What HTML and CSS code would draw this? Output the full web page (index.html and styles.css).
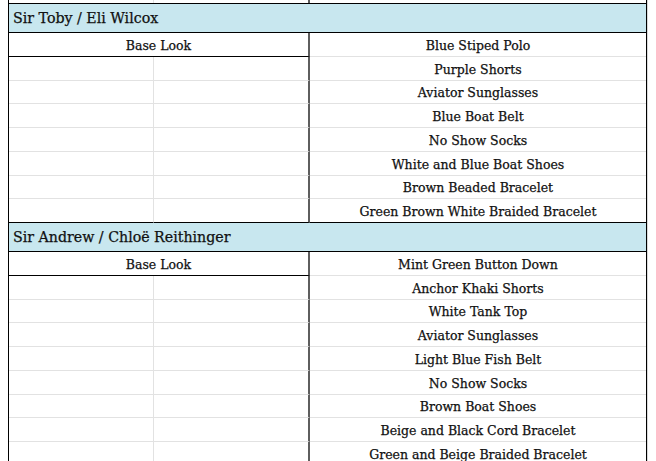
FILE: index.html
```html
<!DOCTYPE html>
<html>
<head>
<meta charset="utf-8">
<link rel="stylesheet" href="styles.css">
</head>
<body>
<div class="sheet">
  <div class="stub"><div class="c a"></div><div class="c b"></div><div class="c r"></div></div>

  <section class="block">
    <div class="hdr">Sir Toby / Eli Wilcox</div>
    <div class="row first"><div class="c ab">Base Look</div><div class="c r">Blue Stiped Polo</div></div>
    <div class="row"><div class="c a"></div><div class="c b"></div><div class="c r">Purple Shorts</div></div>
    <div class="row"><div class="c a"></div><div class="c b"></div><div class="c r">Aviator Sunglasses</div></div>
    <div class="row"><div class="c a"></div><div class="c b"></div><div class="c r">Blue Boat Belt</div></div>
    <div class="row"><div class="c a"></div><div class="c b"></div><div class="c r">No Show Socks</div></div>
    <div class="row"><div class="c a"></div><div class="c b"></div><div class="c r">White and Blue Boat Shoes</div></div>
    <div class="row"><div class="c a"></div><div class="c b"></div><div class="c r">Brown Beaded Bracelet</div></div>
    <div class="row last"><div class="c a"></div><div class="c b"></div><div class="c r">Green Brown White Braided Bracelet</div></div>
  </section>

  <section class="block">
    <div class="hdr">Sir Andrew / Chloë Reithinger</div>
    <div class="row first"><div class="c ab">Base Look</div><div class="c r">Mint Green Button Down</div></div>
    <div class="row"><div class="c a"></div><div class="c b"></div><div class="c r">Anchor Khaki Shorts</div></div>
    <div class="row"><div class="c a"></div><div class="c b"></div><div class="c r">White Tank Top</div></div>
    <div class="row"><div class="c a"></div><div class="c b"></div><div class="c r">Aviator Sunglasses</div></div>
    <div class="row"><div class="c a"></div><div class="c b"></div><div class="c r">Light Blue Fish Belt</div></div>
    <div class="row"><div class="c a"></div><div class="c b"></div><div class="c r">No Show Socks</div></div>
    <div class="row"><div class="c a"></div><div class="c b"></div><div class="c r">Brown Boat Shoes</div></div>
    <div class="row"><div class="c a"></div><div class="c b"></div><div class="c r">Beige and Black Cord Bracelet</div></div>
    <div class="row"><div class="c a"></div><div class="c b"></div><div class="c r">Green and Beige Braided Bracelet</div></div>
  </section>
</div>
</body>
</html>
```

FILE: styles.css
```css
html, body {
  margin: 0;
  padding: 0;
  background: #ffffff;
  overflow: hidden;
}
body {
  width: 656px;
  height: 461px;
  font-family: "DejaVu Serif", "Liberation Serif", serif;
  color: #111111;
  -webkit-text-stroke: 0.25px #111111;
}
.sheet {
  margin-left: 8px;
  width: 639px;
  height: 461px;
  border-left: 1px solid #000;
  border-right: 1px solid #000;
  box-sizing: border-box;
  box-shadow: 1px 0 0 #d9d9d9;
  overflow: hidden;
}
.stub {
  display: flex;
  height: 3px;
  border-bottom: 1px solid #000;
}
.stub .c { height: 3px; }
.hdr {
  height: 28px;
  background: #c8e7ef;
  border-bottom: 1px solid #000;
  font-size: 14.2px;
  line-height: 29px;
  padding-left: 4px;
  white-space: nowrap;
}
.row {
  display: flex;
  height: 23.75px;
  box-sizing: border-box;
}
.c {
  box-sizing: border-box;
  border-bottom: 1px solid #e2e2e2;
  font-size: 12.5px;
  display: flex;
  align-items: center;
  justify-content: center;
  padding-top: 2px;
  white-space: nowrap;
}
.a {
  width: 145px;
  border-right: 1px solid #e2e2e2;
}
.b {
  width: 156px;
  border-right: 2px solid #5e5e5e;
}
.ab {
  width: 301px;
  border-right: 2px solid #5e5e5e;
  border-bottom: 1px solid #000;
}
.r {
  flex: 1;
}
.stub .c { border-bottom: 0; }
.row.last .c { border-bottom: 1px solid #000; }
```
